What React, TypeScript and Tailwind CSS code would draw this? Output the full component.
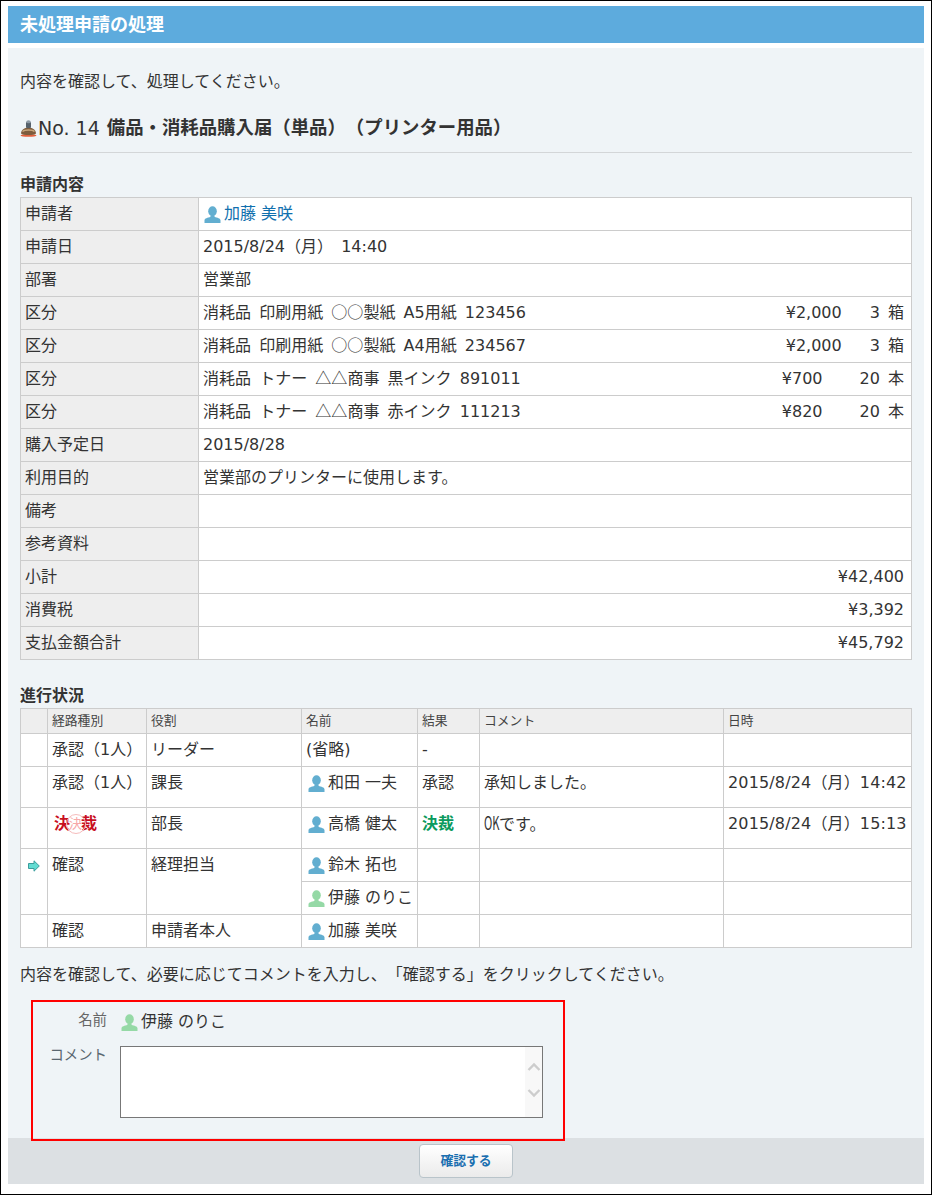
import React from "react";

const FONT = "font-['DejaVu_Sans','Noto_Sans_CJK_JP',sans-serif]";
const CJK = "font-['Noto_Sans_CJK_JP',sans-serif]";

function Person({ green }: { green?: boolean }) {
  return (
    <svg width="17" height="17" viewBox="0 0 17 17" className="shrink-0" fill={green ? "#95d9a6" : "#62aed0"}>
      <ellipse cx="8.500" cy="5.200" rx="4.300" ry="5" />
      <path d="M6.400 9.500h4.200v1.400c2.600.7 5.900 1.300 5.900 3.400V17H.5v-2.700c0-2.100 3.300-2.700 5.900-3.400z" />
    </svg>
  );
}

function User({ name, green, link, shift }: { name: string; green?: boolean; link?: boolean; shift?: boolean }) {
  return (
    <span className={`inline-flex items-center gap-[3px] whitespace-nowrap ${shift ? "ml-[2px]" : "ml-px"} ${link ? "text-[#0f6fae]" : ""}`}>
      <Person green={green} />
      <span>{name}</span>
    </span>
  );
}

function Stamp() {
  return (
    <span className="inline-flex items-center font-bold text-[16px] text-[#c8101f] ml-[2px]">
      <span>決</span>
      <span className="relative w-[11px] h-[16px] flex items-center justify-center">
        <span className="absolute w-[20px] h-[20px] rounded-full border border-[#f6bcbc]" />
        <span className="text-[13px] font-normal text-[#f7a8a8]">決</span>
      </span>
      <span>裁</span>
    </span>
  );
}

function Arrow() {
  return (
    <svg width="12" height="12" viewBox="0 0 12 12" className="block mx-auto">
      <path d="M.5 3.500h5.500V.8L11.300 6 6 11.200V8.500H.5z" fill="#62dcd2" stroke="#3b9c9c" strokeWidth="1" />
    </svg>
  );
}

function Stool() {
  return (
    <svg width="17" height="17" viewBox="0 0 17 17" className="shrink-0">
      <ellipse cx="8.500" cy="15.500" rx="8" ry="1.300" fill="#e2603c" />
      <path d="M1 13.500C1 10 4.500 7.500 8.500 7.500s7.500 2.500 7.500 6c-2 2-13 2-15 0z" fill="#7d5c3d" />
      <path d="M2.500 11.500c2-2 10-2 12 0" fill="none" stroke="#c9a67c" strokeWidth="1.400" />
      <rect x="6" y="2" width="5" height="6" rx="1" fill="#56616b" />
      <ellipse cx="8.500" cy="1.800" rx="2.200" ry="1.500" fill="#8d9aa5" />
    </svg>
  );
}

const th1 = "border border-[#cccccc] bg-[#eeeeee] text-left font-normal align-top pl-[4px] pt-[5px]";
const td1 = "border border-[#cccccc] bg-white align-top pl-[4px] pr-[7px] pt-[5px]";

function Row({ label, children, right }: { label: string; children?: React.ReactNode; right?: boolean }) {
  return (
    <tr className="h-[33px]">
      <th className={th1}>{label}</th>
      <td className={`${td1} ${right ? "text-right" : ""}`}>{children}</td>
    </tr>
  );
}

function Item({ a, marks, b, price, qty, gap }: { a: string; marks: string; b: string; price: string; qty: string; gap: string }) {
  return (
    <div className="flex justify-between">
      <span className="whitespace-pre [word-spacing:-1px]">
        {a}
        <span className={`${CJK} leading-none`}>{marks}</span>
        {b}
      </span>
      <span className="flex">
        <span>{price}</span>
        <span className={`whitespace-pre [word-spacing:3px] ${gap}`}>{qty}</span>
      </span>
    </div>
  );
}

const th2 = "border border-[#cccccc] bg-[#eeeeee] text-left font-normal text-[12.8px] text-[#444] align-middle pl-[4px]";
const td2 = "border border-[#cccccc] bg-white align-top pl-[4px] pt-[5px] whitespace-nowrap";

export default function App() {
  return (
    <div className={`${FONT} w-[932px] h-[1195px] border border-black bg-white pl-[7px] pt-[5px] text-[16px] leading-[22px] text-[#333333] [text-spacing-trim:space-all]`}>
      <div className="w-[916px] h-[37px] bg-[#5dabdd] pl-[12px] flex items-center text-white font-bold text-[18px]">
        未処理申請の処理
      </div>
      <div className="mt-[5px] w-[916px] h-[1090px] bg-[#eff4f7] px-[12px] pt-[23px]">
        <p>内容を確認して、処理してください。</p>
        <div className="mt-[21px] h-[28px] flex items-center text-[18.4px] leading-[28px]">
          <Stool />
          <span className="ml-px text-[19px]">No. 14</span>
          <span className="ml-[7px] font-bold">備品・消耗品購入届（単品）（プリンター用品）</span>
        </div>
        <div className="mt-[10px] border-b border-[#d3d6d8]" />
        <h3 className="mt-[21px] font-bold">申請内容</h3>
        <table className="mt-[1px] w-[892px] table-fixed border-collapse">
          <colgroup>
            <col className="w-[178px]" />
            <col />
          </colgroup>
          <tbody>
            <Row label="申請者"><User name="加藤 美咲" link /></Row>
            <Row label="申請日"><span className="[word-spacing:3px]">2015/8/24（月） 14:40</span></Row>
            <Row label="部署">営業部</Row>
            <Row label="区分"><Item a="消耗品  印刷用紙  " marks="○○" b="製紙  A5用紙  123456" price="¥2,000" qty="3 箱" gap="ml-[28px]" /></Row>
            <Row label="区分"><Item a="消耗品  印刷用紙  " marks="○○" b="製紙  A4用紙  234567" price="¥2,000" qty="3 箱" gap="ml-[28px]" /></Row>
            <Row label="区分"><Item a="消耗品  トナー  " marks="△△" b="商事  黒インク  891011" price="¥700" qty="20 本" gap="ml-[37px]" /></Row>
            <Row label="区分"><Item a="消耗品  トナー  " marks="△△" b="商事  赤インク  111213" price="¥820" qty="20 本" gap="ml-[37px]" /></Row>
            <Row label="購入予定日">2015/8/28</Row>
            <Row label="利用目的">営業部のプリンターに使用します。</Row>
            <Row label="備考" />
            <Row label="参考資料" />
            <Row label="小計" right>¥42,400</Row>
            <Row label="消費税" right>¥3,392</Row>
            <Row label="支払金額合計" right>¥45,792</Row>
          </tbody>
        </table>
        <h3 className="mt-[25px] font-bold">進行状況</h3>
        <table className="mt-[1px] w-[892px] table-fixed border-collapse">
          <colgroup>
            <col className="w-[27px]" />
            <col className="w-[99px]" />
            <col className="w-[155px]" />
            <col className="w-[116px]" />
            <col className="w-[62px]" />
            <col className="w-[244px]" />
            <col />
          </colgroup>
          <thead>
            <tr className="h-[25px]">
              <th className={th2}></th>
              <th className={th2}>経路種別</th>
              <th className={th2}>役割</th>
              <th className={th2}>名前</th>
              <th className={th2}>結果</th>
              <th className={th2}>コメント</th>
              <th className={th2}>日時</th>
            </tr>
          </thead>
          <tbody>
            <tr className="h-[33px]">
              <td className={td2}></td>
              <td className={td2}>承認（1人）</td>
              <td className={td2}>リーダー</td>
              <td className={td2}>(省略)</td>
              <td className={td2}>-</td>
              <td className={td2}></td>
              <td className={td2}></td>
            </tr>
            <tr className="h-[41px]">
              <td className={td2}></td>
              <td className={td2}>承認（1人）</td>
              <td className={td2}>課長</td>
              <td className={td2}><User name="和田 一夫" shift /></td>
              <td className={td2}>承認</td>
              <td className={td2}>承知しました。</td>
              <td className={`${td2} tracking-[0.15px]`}>2015/8/24（月）14:42</td>
            </tr>
            <tr className="h-[41px]">
              <td className={td2}></td>
              <td className={td2}><Stamp /></td>
              <td className={td2}>部長</td>
              <td className={td2}><User name="高橋 健太" shift /></td>
              <td className={`${td2} font-bold text-[#0b9a5d]`}>決裁</td>
              <td className={td2}>
                <span className={`${CJK} inline-block w-[15px] origin-left scale-x-[0.62] text-[18px] leading-none`}>OK</span>です。
              </td>
              <td className={`${td2} tracking-[0.15px]`}>2015/8/24（月）15:13</td>
            </tr>
            <tr className="h-[33px]">
              <td className="border border-[#cccccc] bg-white align-top pt-[11px]" rowSpan={2}><Arrow /></td>
              <td className={td2} rowSpan={2}>確認</td>
              <td className={td2} rowSpan={2}>経理担当</td>
              <td className={td2}><User name="鈴木 拓也" shift /></td>
              <td className={td2}></td>
              <td className={td2}></td>
              <td className={td2}></td>
            </tr>
            <tr className="h-[33px]">
              <td className={td2}><User name="伊藤 のりこ" green shift /></td>
              <td className={td2}></td>
              <td className={td2}></td>
              <td className={td2}></td>
            </tr>
            <tr className="h-[33px]">
              <td className={td2}></td>
              <td className={td2}>確認</td>
              <td className={td2}>申請者本人</td>
              <td className={td2}><User name="加藤 美咲" shift /></td>
              <td className={td2}></td>
              <td className={td2}></td>
              <td className={td2}></td>
            </tr>
          </tbody>
        </table>
        <p className="mt-[16px]">内容を確認して、必要に応じてコメントを入力し、「確認する」をクリックしてください。</p>
        <div className="relative z-10 mt-[14px] ml-[11px] w-[534px] h-[141px] border-2 border-[#ff0000]">
          <div className="mt-[9px] flex items-center">
            <span className="w-[74px] -translate-y-[4px] text-right text-[14.4px] text-[#666666]">名前</span>
            <span className="ml-[13px]"><User name="伊藤 のりこ" green /></span>
          </div>
          <div className="mt-[9px] flex items-start">
            <span className="w-[74px] -mt-[2px] text-right text-[14.4px] text-[#5a6770]">コメント</span>
            <div className="ml-[13px] w-[423px] h-[72px] border border-[#777777] bg-white flex">
              <textarea aria-label="コメント" className="flex-1 resize-none outline-none bg-white" />
              <div className="w-[17px] bg-[#f8f8f8] flex flex-col items-center pt-[14px] gap-[14px]">
                <svg width="14" height="12" viewBox="0 0 14 12" fill="none" stroke="#cdcdcd" strokeWidth="2.400"><path d="M1.500 9L7 3.500 12.500 9" /></svg>
                <svg width="14" height="12" viewBox="0 0 14 12" fill="none" stroke="#cdcdcd" strokeWidth="2.400"><path d="M1.500 3L7 8.500 12.500 3" /></svg>
              </div>
            </div>
          </div>
        </div>
      </div>
      <div className="w-[916px] h-[46px] bg-[#dce0e3] flex justify-center pt-[6px]">
        <button className="w-[94px] h-[34px] rounded-[4px] border border-[#b9c4ca] bg-gradient-to-b from-white to-[#ebebeb] text-[12.8px] font-bold text-[#1a6fb0]">
          確認する
        </button>
      </div>
    </div>
  );
}
